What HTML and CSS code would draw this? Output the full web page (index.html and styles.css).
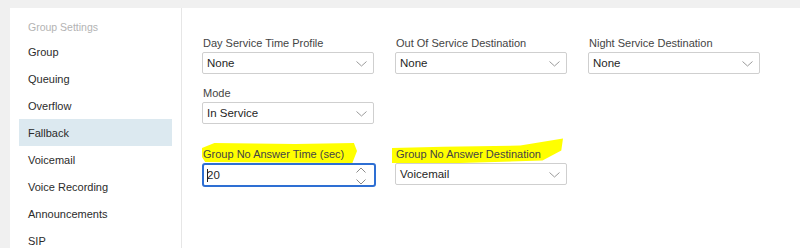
FILE: index.html
```html
<!DOCTYPE html>
<html>
<head>
<meta charset="utf-8">
<link rel="stylesheet" href="styles.css">
</head>
<body>
<div class="panel">
  <nav class="sidebar">
    <div class="side-head">Group Settings</div>
    <div class="side-item">Group</div>
    <div class="side-item">Queuing</div>
    <div class="side-item">Overflow</div>
    <div class="side-item active">Fallback</div>
    <div class="side-item">Voicemail</div>
    <div class="side-item">Voice Recording</div>
    <div class="side-item">Announcements</div>
    <div class="side-item">SIP</div>
  </nav>
  <main class="main">
    <div class="grid">
      <div class="field">
        <div class="label">Day Service Time Profile</div>
        <div class="select"><span>None</span><svg class="chev" width="11" height="6" viewBox="0 0 11 6"><path d="M0.5 0.5 L5.5 5 L10.5 0.5" fill="none" stroke="#9a9a9a" stroke-width="1"/></svg></div>
      </div>
      <div class="field">
        <div class="label">Out Of Service Destination</div>
        <div class="select"><span>None</span><svg class="chev" width="11" height="6" viewBox="0 0 11 6"><path d="M0.5 0.5 L5.5 5 L10.5 0.5" fill="none" stroke="#9a9a9a" stroke-width="1"/></svg></div>
      </div>
      <div class="field">
        <div class="label">Night Service Destination</div>
        <div class="select"><span>None</span><svg class="chev" width="11" height="6" viewBox="0 0 11 6"><path d="M0.5 0.5 L5.5 5 L10.5 0.5" fill="none" stroke="#9a9a9a" stroke-width="1"/></svg></div>
      </div>
      <div class="field row2">
        <div class="label">Mode</div>
        <div class="select"><span>In Service</span><svg class="chev" width="11" height="6" viewBox="0 0 11 6"><path d="M0.5 0.5 L5.5 5 L10.5 0.5" fill="none" stroke="#9a9a9a" stroke-width="1"/></svg></div>
      </div>
    </div>
    <div class="grid row3">
      <div class="field">
        <div class="label hl hl-left"><span class="hl-text">Group No Answer Time (sec)</span></div>
        <div class="select focused"><span class="caret"></span><span>20</span><svg class="spin" width="10" height="18" viewBox="0 0 10 18"><path d="M0.5 5.5 L5 1 L9.5 5.5" fill="none" stroke="#8a8a8a" stroke-width="1"/><path d="M0.5 12.5 L5 17 L9.5 12.5" fill="none" stroke="#8a8a8a" stroke-width="1"/></svg></div>
      </div>
      <div class="field">
        <div class="label hl hl-right"><span class="hl-text">Group No Answer Destination</span></div>
        <div class="select"><span>Voicemail</span><svg class="chev" width="11" height="6" viewBox="0 0 11 6"><path d="M0.5 0.5 L5.5 5 L10.5 0.5" fill="none" stroke="#9a9a9a" stroke-width="1"/></svg></div>
      </div>
    </div>
  </main>
</div>
</body>
</html>
```

FILE: styles.css
```css
html, body {
  margin: 0;
  padding: 0;
}
body {
  background: #f0f0f0;
  font-family: "Liberation Sans", Arial, sans-serif;
  font-size: 11px;
  color: #333;
  height: 248px;
  overflow: hidden;
}
.panel {
  margin: 8px 0 0 10px;
  background: #fff;
  display: flex;
  height: 240px;
  overflow: hidden;
}
.sidebar {
  width: 171px;
  border-right: 1px solid #e6e6e6;
  padding-top: 8px;
  flex-shrink: 0;
}
.side-head {
  height: 22px;
  line-height: 22px;
  padding-left: 18px;
  color: #b3b3b3;
  font-size: 10.5px;
}
.side-item {
  height: 27px;
  line-height: 28px;
  margin: 0 9px;
  padding-left: 9px;
  color: #2b2b2b;
  font-size: 11px;
}
.side-item.active {
  background: #dce9f0;
}
.main {
  flex: 1;
  padding: 28px 0 0 20px;
}
.grid {
  display: grid;
  grid-template-columns: 172px 172px 172px;
  column-gap: 21px;
}
.field {
  display: flex;
  flex-direction: column;
}
.row2 {
  margin-top: 12px;
}
.row3 {
  margin-top: 23px;
}
.label {
  height: 16px;
  line-height: 14px;
  color: #444;
  font-size: 11px;
  padding-left: 1px;
  position: relative;
}
.hl-text {
  position: relative;
}
.hl::before {
  content: "";
  position: absolute;
  background: #ffff00;
}
.hl-left::before {
  left: 0px;
  top: -4px;
  width: 155px;
  height: 20px;
  clip-path: polygon(0 25%, 8% 0, 60% 5%, 98% 0, 100% 40%, 97% 100%, 2% 95%, 0 70%);
}
.hl-right::before {
  left: -3px;
  top: -9px;
  width: 171px;
  height: 25px;
  clip-path: polygon(0 40%, 30% 35%, 75% 30%, 100% 2%, 99% 50%, 88% 90%, 40% 100%, 0 100%);
}
.select {
  height: 22px;
  box-sizing: border-box;
  border: 1px solid #cfcfcf;
  border-radius: 2px;
  display: flex;
  align-items: center;
  padding: 0 0 0 4px;
  color: #1f1f1f;
  font-size: 11.5px;
  position: relative;
}
.select span {
  flex: 1;
}
.chev {
  position: absolute;
  right: 6px;
  top: 8px;
}
.focused {
  height: 24px;
  width: 174px;
  border: 2px solid #2e6fd3;
  border-radius: 3px;
  padding-left: 3px;
}
.select .caret {
  flex: 0 0 1px;
  width: 1px;
  height: 13px;
  background: #222;
  margin-right: -1px;
}
.spin {
  position: absolute;
  right: 8px;
  top: 2px;
}
```
